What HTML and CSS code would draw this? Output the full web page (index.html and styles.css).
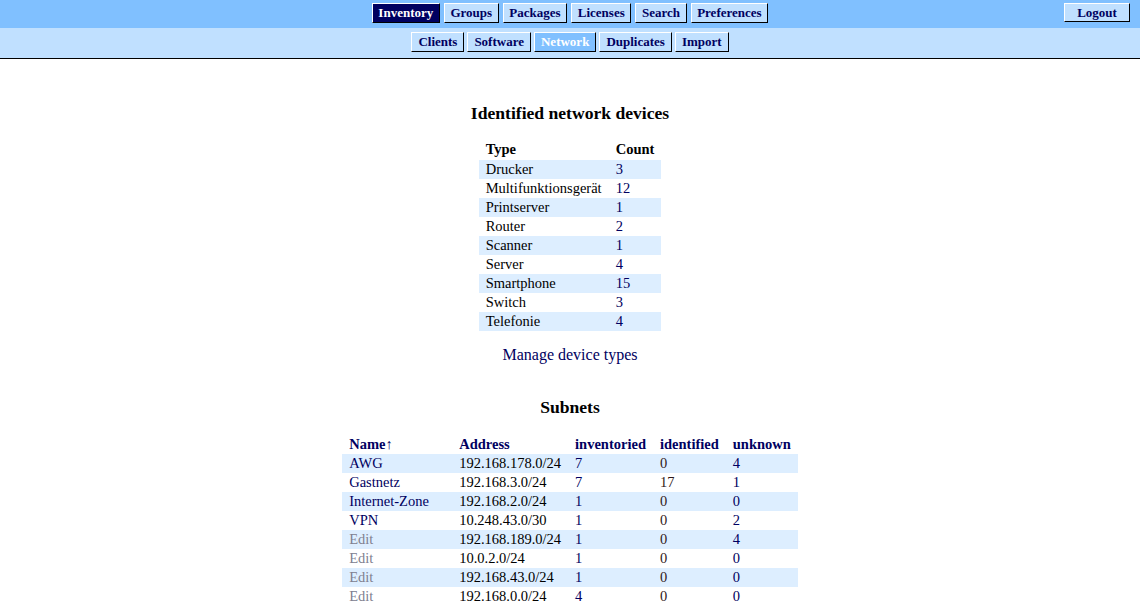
FILE: index.html
```html
<!DOCTYPE html>
<html>
<head>
<meta charset="utf-8">
<title>Network</title>
<link rel="stylesheet" href="styles.css">
</head>
<body>
<header class="header">
  <div class="menu-top">
    <nav class="menu main-menu">
      <a class="btn active" href="#">Inventory</a>
      <a class="btn" href="#">Groups</a>
      <a class="btn" href="#">Packages</a>
      <a class="btn" href="#">Licenses</a>
      <a class="btn" href="#">Search</a>
      <a class="btn" href="#">Preferences</a>
    </nav>
    <a class="btn logout" href="#">Logout</a>
  </div>
  <nav class="menu menu-sub">
    <a class="btn" href="#">Clients</a>
    <a class="btn" href="#">Software</a>
    <a class="btn current" href="#">Network</a>
    <a class="btn" href="#">Duplicates</a>
    <a class="btn" href="#">Import</a>
  </nav>
</header>
<main class="content">
  <h2 class="title first">Identified network devices</h2>
  <table class="list devices">
    <thead><tr><th>Type</th><th>Count</th></tr></thead>
    <tbody>
      <tr><td>Drucker</td><td><a href="#">3</a></td></tr>
      <tr><td>Multifunktionsgerät</td><td><a href="#">12</a></td></tr>
      <tr><td>Printserver</td><td><a href="#">1</a></td></tr>
      <tr><td>Router</td><td><a href="#">2</a></td></tr>
      <tr><td>Scanner</td><td><a href="#">1</a></td></tr>
      <tr><td>Server</td><td><a href="#">4</a></td></tr>
      <tr><td>Smartphone</td><td><a href="#">15</a></td></tr>
      <tr><td>Switch</td><td><a href="#">3</a></td></tr>
      <tr><td>Telefonie</td><td><a href="#">4</a></td></tr>
    </tbody>
  </table>
  <p class="manage"><a href="#">Manage device types</a></p>
  <h2 class="title subnets-title">Subnets</h2>
  <table class="list subnets">
    <thead><tr><th class="name-col"><a href="#">Name↑</a></th><th><a href="#">Address</a></th><th><a href="#">inventoried</a></th><th><a href="#">identified</a></th><th><a href="#">unknown</a></th></tr></thead>
    <tbody>
      <tr><td><a href="#">AWG</a></td><td>192.168.178.0/24</td><td><a href="#">7</a></td><td><a class="ident" href="#">0</a></td><td><a href="#">4</a></td></tr>
      <tr><td><a href="#">Gastnetz</a></td><td>192.168.3.0/24</td><td><a href="#">7</a></td><td><a class="ident" href="#">17</a></td><td><a href="#">1</a></td></tr>
      <tr><td><a href="#">Internet-Zone</a></td><td>192.168.2.0/24</td><td><a href="#">1</a></td><td><a class="ident" href="#">0</a></td><td><a href="#">0</a></td></tr>
      <tr><td><a href="#">VPN</a></td><td>10.248.43.0/30</td><td><a href="#">1</a></td><td><a class="ident" href="#">0</a></td><td><a href="#">2</a></td></tr>
      <tr><td><a class="edit" href="#">Edit</a></td><td>192.168.189.0/24</td><td><a href="#">1</a></td><td><a class="ident" href="#">0</a></td><td><a href="#">4</a></td></tr>
      <tr><td><a class="edit" href="#">Edit</a></td><td>10.0.2.0/24</td><td><a href="#">1</a></td><td><a class="ident" href="#">0</a></td><td><a href="#">0</a></td></tr>
      <tr><td><a class="edit" href="#">Edit</a></td><td>192.168.43.0/24</td><td><a href="#">1</a></td><td><a class="ident" href="#">0</a></td><td><a href="#">0</a></td></tr>
      <tr><td><a class="edit" href="#">Edit</a></td><td>192.168.0.0/24</td><td><a href="#">4</a></td><td><a class="ident" href="#">0</a></td><td><a href="#">0</a></td></tr>
    </tbody>
  </table>
</main>
</body>
</html>
```
FILE: styles.css
```css
html, body {
  margin: 0;
  padding: 0;
  background: #ffffff;
  font-family: "Liberation Serif", "Times New Roman", serif;
  color: #000000;
}
a {
  color: #000060;
  text-decoration: none;
}
.header {
  border-bottom: 1px solid #000000;
}
.menu-top {
  background: #80c0ff;
  height: 28px;
  position: relative;
  display: flex;
  justify-content: center;
  align-items: flex-start;
}
.menu {
  display: flex;
  gap: 4px;
}
.main-menu {
  padding-top: 3px;
}
.menu-sub {
  background: #c0e0ff;
  height: 30px;
  box-sizing: border-box;
  padding-top: 4px;
  justify-content: center;
  gap: 3px;
}
.btn {
  display: block;
  font-size: 13px;
  font-weight: bold;
  line-height: 16px;
  padding: 1px 6px 0 6px;
  height: 17px;
  background: #c0e0ff;
  color: #000060;
  border: 1px solid;
  border-color: #ffffff #000000 #000000 #ffffff;
}
.main-menu .btn {
  padding: 1px 5.6px 0 5.6px;
}
.btn.active {
  background: #000060;
  color: #ffffff;
}
.btn.current {
  background: #80c0ff;
  color: #ffffff;
}
.logout {
  position: absolute;
  right: 10px;
  top: 3px;
  width: 52px;
  text-align: center;
  height: 16px;
}
.content {
  display: flex;
  flex-direction: column;
  align-items: center;
  padding-bottom: 20px;
}
.title {
  font-size: 17.6px;
  font-weight: bold;
  line-height: 21px;
  margin: 0 0 16px 0;
}
.title.first {
  margin-top: 44px;
}
.title.subnets-title {
  margin-bottom: 17px;
}
.list {
  border-collapse: collapse;
  font-size: 14.5px;
}
.list th, .list td {
  text-align: left;
  padding: 1px 7px;
  line-height: 17px;
  white-space: nowrap;
}
.list th {
  font-weight: bold;
}
.devices th {
  padding-bottom: 2px;
}
.list tbody tr:nth-child(odd) {
  background: #ddeeff;
}
.subnets .name-col {
  min-width: 96px;
}
.ident {
  color: #301818;
}
.edit {
  color: #80808f;
}
.manage {
  font-size: 16px;
  line-height: 19px;
  margin: 14px 0 33px 0;
}
```
